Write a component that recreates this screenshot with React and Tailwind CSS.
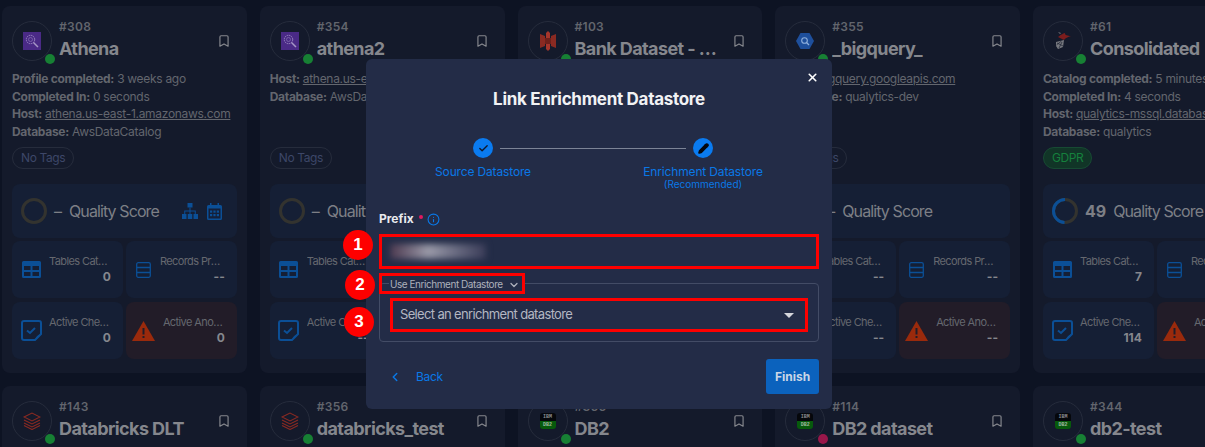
import { Bookmark, Check, ChevronDown, ChevronLeft, Info, Pencil, X } from 'lucide-react'

const cards = [
  {
    id: '#308', name: 'Athena', logo: 'athena',
    lines: [['Profile completed:', '3 weeks ago'], ['Completed In:', '0 seconds'], ['Host:', 'athena.us-east-1.amazonaws.com', true], ['Database:', 'AwsDataCatalog']],
    tables: '0', records: '--', checks: '0', anomalies: '0', actions: true,
  },
  {
    id: '#354', name: 'athena2', logo: 'athena',
    lines: [['Host:', 'athena.us-east-1.amazonaws.com', true], ['Database:', 'AwsDataCatalog']],
    tables: '--', records: '--', checks: '--', anomalies: '--',
  },
  {
    id: '#103', name: 'Bank Dataset - Staging', logo: 'bank',
    lines: [['Host:', 'bank.s3.amazonaws.com', true], ['Database:', 'bank']],
    tables: '--', records: '--', checks: '--', anomalies: '--',
  },
  {
    id: '#355', name: '_bigquery_', logo: 'bigquery',
    lines: [['Host:', 'bigquery.googleapis.com', true], ['Database:', 'qualytics-dev']],
    tables: '--', records: '--', checks: '--', anomalies: '--',
  },
  {
    id: '#61', name: 'Consolidated', logo: 'mssql', tag: 'GDPR', score: 49,
    lines: [['Catalog completed:', '5 minutes ago'], ['Completed In:', '4 seconds'], ['Host:', 'qualytics-mssql.database.windows.net', true], ['Database:', 'qualytics']],
    tables: '7', records: '--', checks: '114', anomalies: '--',
  },
  { id: '#143', name: 'Databricks DLT', logo: 'databricks' },
  { id: '#356', name: 'databricks_test', logo: 'databricks' },
  { id: '#366', name: 'DB2', logo: 'db2' },
  { id: '#114', name: 'DB2 dataset', logo: 'db2', failed: true },
  { id: '#344', name: 'db2-test', logo: 'db2' },
]

function Logo({ kind }) {
  if (kind === 'athena') {
    return (
      <svg width="18" height="18" viewBox="0 0 18 18">
        <rect width="18" height="18" fill="#4a2a86" />
        <circle cx="7.5" cy="7.5" r="4.2" fill="none" stroke="#9d8ac2" strokeWidth="1" strokeDasharray="1.5 0.7" />
        <circle cx="7.5" cy="7.5" r="2" fill="none" stroke="#7f6bab" strokeWidth="0.8" />
        <path d="M10.5 10.5l4.5 4.5" stroke="#a596c6" strokeWidth="1.5" />
      </svg>
    )
  }
  if (kind === 'bank') {
    return (
      <svg width="16" height="20" viewBox="0 0 16 20">
        <path d="M0 3l5 2v10l-5 2zM16 3l-5 2v10l5 2z" fill="#8a2a22" />
        <path d="M6 2l2-2 2 2v5H6zM6 13h4v5l-2 2-2-2z" fill="#a5352b" />
        <path d="M5 7h6v6H5z" fill="#6e201b" />
      </svg>
    )
  }
  if (kind === 'bigquery') {
    return (
      <svg width="18" height="16" viewBox="0 0 18 16">
        <path d="M4.5 0h9L18 8l-4.500 8h-9L0 8z" fill="#1e4f9c" />
        <circle cx="8.500" cy="7.500" r="2.800" fill="none" stroke="#8fb0dd" strokeWidth="1.100" />
        <path d="M10.500 9.500l2.500 2.500" stroke="#8fb0dd" strokeWidth="1.200" />
      </svg>
    )
  }
  if (kind === 'mssql') {
    return (
      <svg width="16" height="18" viewBox="0 0 16 18">
        <path d="M3 5c4-3 6-4 7-4-1 2 3 3 6 3-3 1-6 2-7 4-2-1-4-2-6-3z" fill="#7c1d1d" />
        <path d="M1 10l8-2-1 7-5 2-2-3z" fill="#77797f" />
        <path d="M2 11l6 3M1.500 13l5-4M4 16l3-6" stroke="#1b2130" strokeWidth="0.700" />
        <path d="M3 0l3 1-1 1z" fill="#77797f" />
      </svg>
    )
  }
  if (kind === 'databricks') {
    return (
      <svg width="18" height="18" viewBox="0 0 18 18" fill="none" stroke="#8a2a22" strokeWidth="1.100">
        <path d="M1 5l8-4 8 4-8 4z" />
        <path d="M1 8l8 4 8-4" />
        <path d="M1 11l8 4 8-4" />
        <path d="M1 13.500l8 4 8-4" />
      </svg>
    )
  }
  return (
    <div className="w-4 h-[16px] rounded-[3px] overflow-hidden flex flex-col text-center font-['Liberation_Mono',monospace] text-[5px] leading-[8px] font-bold">
      <div className="h-2 bg-[#05070b] text-[#8a8c90]">IBM</div>
      <div className="h-2 bg-[#075a0c] text-[#9fb8a0]">DB2</div>
    </div>
  )
}

function TreeIcon() {
  return (
    <svg width="16" height="16" viewBox="0 0 16 16" fill="#0b4f96">
      <rect x="5.500" y="0" width="5" height="4.500" />
      <rect x="0" y="11" width="4.500" height="5" />
      <rect x="5.750" y="11" width="4.500" height="5" />
      <rect x="11.500" y="11" width="4.500" height="5" />
      <path d="M7.500 4.500h1v3h5.250v3.500h-1V8.500H8.500V11h-1V8.500H3.250V11h-1V7.500H7.500z" />
    </svg>
  )
}

function CalendarIcon() {
  return (
    <svg width="15" height="17" viewBox="0 0 15 17">
      <path d="M3 0h1.500v2h6V0H12v2h1.500A1.500 1.500 0 0115 3.500v12a1.500 1.500 0 01-1.500 1.500h-12A1.500 1.500 0 010 15.500v-12A1.500 1.500 0 011.500 2H3z" fill="#0b4f96" />
      <rect x="1.500" y="5.500" width="12" height="10" fill="#14203a" />
      <g fill="#0b4f96">
        <rect x="3" y="7.500" width="2.200" height="2.200" />
        <rect x="6.400" y="7.500" width="2.200" height="2.200" />
        <rect x="9.800" y="7.500" width="2.200" height="2.200" />
        <rect x="3" y="11" width="2.200" height="2.200" />
        <rect x="6.400" y="11" width="2.200" height="2.200" />
        <rect x="9.800" y="11" width="2.200" height="2.200" />
      </g>
    </svg>
  )
}

function TableIcon() {
  return (
    <svg width="19" height="17" viewBox="0 0 19 17" className="shrink-0">
      <path fillRule="evenodd" d="M1.500 0h16A1.500 1.500 0 0119 1.500v14a1.500 1.500 0 01-1.500 1.500h-16A1.500 1.500 0 010 15.500v-14A1.500 1.500 0 011.500 0zM2 5v4h6.500V5zm8.500 0v4H17V5zM2 11v4h6.500v-4zm8.500 0v4H17v-4z" fill="#0b4f96" />
    </svg>
  )
}

function RecordsIcon() {
  return (
    <svg width="15" height="16" viewBox="0 0 15 16" fill="none" stroke="#0b4f96" strokeWidth="1.300" className="shrink-0">
      <rect x="0.700" y="0.700" width="13.600" height="14.600" rx="1.500" />
      <path d="M0.700 5.500h13.600M0.700 10.500h13.600" />
    </svg>
  )
}

function CheckIcon() {
  return (
    <svg width="21" height="21" viewBox="0 0 21 21" fill="none" className="shrink-0">
      <path d="M3 1h15a2 2 0 012 2v11l-6 6H3a2 2 0 01-2-2V3a2 2 0 012-2z" stroke="#0b4f96" strokeWidth="2" />
      <path d="M6 10.500l3 2.500 5-5" stroke="#0b4f96" strokeWidth="2" />
      <path d="M20 14.500A5.500 5.500 0 0014.500 20z" fill="#0b4f96" />
    </svg>
  )
}

function WarnIcon() {
  return (
    <svg width="23" height="20" viewBox="0 0 23 20" className="shrink-0">
      <path d="M11.500 0L23 20H0z" fill="#9a2a0c" />
      <path d="M10.500 7h2v6.500h-2zM10.500 15h2v2h-2z" fill="#221c28" />
    </svg>
  )
}

// iconBox sets where the label starts, it differs a little per stat in the picture
function Stat({ icon, iconBox, label, value, alert }) {
  return (
    <div className={`h-[57px] rounded-lg flex items-center pr-[12px] ${alert ? 'bg-[#221c28]' : 'bg-[#151f35]'}`}>
      <div className={`flex justify-center shrink-0 ${iconBox}`}>{icon}</div>
      <div className="flex-1 min-w-0 -mt-[2px]">
        <div className="text-[11px] leading-4 text-[#65686f] truncate tracking-[-0.6px]">{label}</div>
        <div className="text-[12px] leading-4 font-bold text-right text-[#85878d]">{value}</div>
      </div>
    </div>
  )
}

function Card({ card }) {
  return (
    <div className="h-[367px] bg-[#141a2b] rounded-lg px-[10px] pt-[15px]">
      <div className="flex items-start">
        <div className="relative w-10 h-10 rounded-full border border-[#262c3c] flex items-center justify-center shrink-0">
          <Logo kind={card.logo} />
          <span className={`absolute right-[-4px] bottom-[-4px] w-[10px] h-[10px] rounded-full ${card.failed ? 'bg-[#99174a]' : 'bg-[#178034]'}`} />
        </div>
        <div className="ml-[7px] flex-1 min-w-0">
          <div className="text-[12px] leading-[12px] font-semibold text-[#62656d] tracking-[0.3px]">{card.id}</div>
          <div className="text-[18px] leading-6 mt-[4px] font-bold text-[#85878d] truncate tracking-[-0.6px]">{card.name}</div>
        </div>
        <Bookmark size={14} strokeWidth={2} className="text-[#85878d] mt-[13px] mr-[6px] ml-[8px] shrink-0" />
      </div>

      {card.lines && (
        <>
          <div className="mt-[9px] h-[68px] text-[12px] leading-[17.600px] text-[#63666e] whitespace-nowrap tracking-[-0.300px]">
            {card.lines.map(([key, val, link]) => (
              <div key={key}>
                <span className="font-bold">{key}</span>{' '}
                <span className={link ? 'underline' : ''}>{val}</span>
              </div>
            ))}
          </div>
          <div className="mt-[9px]">
            {card.tag ? (
              <span className="block w-fit h-[22px] leading-[20px] px-[8px] rounded-full border border-[#174a33] bg-[#113527] text-[12px] text-[#15803d] tracking-[-0.4px]">{card.tag}</span>
            ) : (
              <span className="block w-fit h-[22px] leading-[20px] px-[8px] rounded-full border border-[#262c3c] text-[12px] text-[#3d4768] tracking-[-0.4px]">No Tags</span>
            )}
          </div>

          <div className="mt-[15px] h-[54px] rounded-lg bg-[#151f35] flex items-center pl-[9px] pr-[15px]">
            {card.score ? (
              <svg width="26" height="26" viewBox="0 0 26 26" fill="none" className="shrink-0">
                <circle cx="13" cy="13" r="11.500" stroke="#33332f" strokeWidth="3" />
                <circle cx="13" cy="13" r="11.500" stroke="#0b4f96" strokeWidth="3" strokeDasharray="35.400 72.300" transform="rotate(-90 13 13) scale(1 -1) translate(0 -26)" />
              </svg>
            ) : (
              <span className="w-[26px] h-[26px] rounded-full border-[3px] border-[#33332f] shrink-0" />
            )}
            <span className={`ml-[7px] text-[16px] text-[#7d7f86] ${card.score ? 'font-bold' : ''}`}>{card.score || '–'}</span>
            <span className="ml-[7px] text-[16px] text-[#7d7f86] whitespace-nowrap tracking-[-0.900px]">Quality Score</span>
            {card.actions && (
              <div className="ml-auto flex items-center gap-[9px]">
                <TreeIcon />
                <CalendarIcon />
              </div>
            )}
          </div>

          <div className="mt-[3px] grid grid-cols-2 gap-x-[3px] gap-y-[4px]">
            <Stat icon={<TableIcon />} iconBox="w-[22px] ml-[8px] mr-[7px]" label="Tables Cataloged" value={card.tables} />
            <Stat icon={<RecordsIcon />} iconBox="w-[19px] ml-[8px] mr-[7px]" label="Records Profiled" value={card.records} />
            <Stat icon={<CheckIcon />} iconBox="w-[22px] ml-[8px] mr-[7px]" label="Active Checks" value={card.checks} />
            <Stat icon={<WarnIcon />} iconBox="w-[23px] ml-[6px] mr-[8px]" label="Active Anomalies" value={card.anomalies} alert />
          </div>
        </>
      )}
    </div>
  )
}

function Marker({ n, className }) {
  return (
    <span className={`absolute w-[30px] h-[30px] rounded-full bg-[#fe0000] text-white flex items-center justify-center text-[17px] font-bold font-['Liberation_Sans',sans-serif] ${className}`}>
      {n}
    </span>
  )
}

function Modal() {
  return (
    <div className="absolute left-[366px] top-[59px] w-[466px] h-[350px] bg-[#232c47] rounded-md px-[13px]">
      <X size={13} strokeWidth={3} className="absolute right-[13px] top-[12px] text-white" />
      <h2 className="pt-[29px] text-center text-[17px] leading-[22px] font-bold text-[#f1f2f4] tracking-[-0.300px]">Link Enrichment Datastore</h2>

      <div className="mt-[28px] ml-[49px] flex items-start">
        <div className="w-[110px] flex flex-col items-center">
          <span className="w-5 h-5 rounded-full bg-[#0a7bf0] flex items-center justify-center">
            <Check size={11} strokeWidth={3} className="text-[#10182c]" />
          </span>
          <span className="mt-[6px] text-[12px] leading-4 text-[#0a78e6] whitespace-nowrap tracking-[-0.150px]">Source Datastore</span>
        </div>
        <div className="w-[186px] h-px bg-[#7c8496] mt-[10px] -ml-[38px] shrink-0" />
        <div className="w-[150px] -ml-[58px] flex flex-col items-center shrink-0">
          <span className="w-5 h-5 rounded-full bg-[#0a7bf0] flex items-center justify-center">
            <Pencil size={11} strokeWidth={3} fill="#05080f" className="text-[#05080f]" />
          </span>
          <span className="mt-[6px] text-[12px] leading-4 text-[#0a78e6] whitespace-nowrap tracking-[-0.150px]">Enrichment Datastore</span>
          <span className="text-[10px] leading-[9px] text-[#0a78e6] whitespace-nowrap">(Recommended)</span>
        </div>
      </div>

      <div className="mt-[22px] flex items-center h-4">
        <span className="text-[12px] font-bold text-[#e9eaee]">Prefix</span>
        <span className="ml-[5px] -mt-[4px] w-[4px] h-[4px] rounded-full bg-[#e0195f]" />
        <Info size={13} className="ml-[4px] text-[#0a78e6]" />
      </div>

      <div className="mt-[7px] h-[35px] border-[3px] border-[#fe0000] flex items-center pl-[8px]">
        <div className="w-[96px] h-[15px] bg-linear-to-r from-[#4d3a50] via-[#9a9aa8] via-40% to-[#3a3c58] blur-[3px]" />
      </div>

      <fieldset className="mt-[4px] h-[69px] border border-[#434c66] rounded px-[10px]">
        <legend className="relative ml-[-1px] h-[21px] pt-[2px] pl-[1px] pr-[2px] flex items-center text-[10px] leading-[19px] text-[#aeb1bc] tracking-[-0.450px]">
          <span className="absolute -left-[10px] -right-[3px] top-[0px] bottom-[0px] border-[3px] border-[#fe0000]" />
          Use Enrichment Datastore
          <ChevronDown size={12} strokeWidth={2.500} className="ml-[5px] text-[#aeb1bc]" />
        </legend>
        <div className="mt-[4px] h-[34px] border-[3px] border-[#fe0000] flex items-center pl-[7px] pr-[11px]">
          <span className="text-[13px] text-[#b4b7c2] tracking-[-0.650px]">Select an enrichment datastore</span>
          <span className="ml-auto w-0 h-0 border-x-[5px] border-x-transparent border-t-[5px] border-t-[#d5d6dc]" />
        </div>
      </fieldset>

      <div className="mt-[17px] flex items-center">
        <ChevronLeft size={14} strokeWidth={2.500} className="ml-[9px] text-[#0a78e6]" />
        <span className="ml-[14px] text-[12px] text-[#0a78e6] tracking-[-0.3px]">Back</span>
        <span className="ml-auto w-[53px] h-[35px] rounded-[3px] bg-[#0b62bd] flex items-center justify-center text-[12px] font-bold text-[#c9d6e6]">Finish</span>
      </div>

      <Marker n="1" className="left-[-23px] top-[171px]" />
      <Marker n="2" className="left-[-21px] top-[211px]" />
      <Marker n="3" className="left-[-22px] top-[248px]" />
    </div>
  )
}

export default function App() {
  return (
    <div className="relative w-[1205px] h-[447px] overflow-hidden bg-[#0d1323] font-['Inter',sans-serif]">
      <div className="w-[1300px] pl-[2px] pt-[6px] grid grid-cols-[repeat(5,244.750px)] gap-x-[13px] gap-y-[13px]">
        {cards.map((card) => (
          <Card key={card.id} card={card} />
        ))}
      </div>
      <Modal />
    </div>
  )
}
